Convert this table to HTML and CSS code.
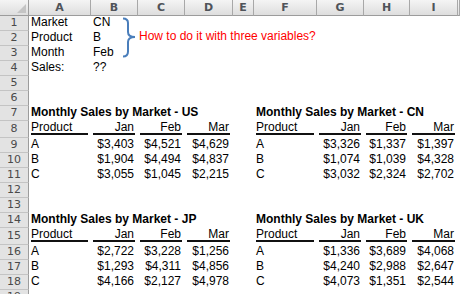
FILE: index.html
```html
<!DOCTYPE html>
<html>
<head>
<meta charset="utf-8">
<link rel="stylesheet" href="styles.css">
</head>
<body>
<div class="sheet">
  <div class="row hdr">
    <div class="corner"><span class="tri"></span></div>
    <div class="ch">A</div><div class="ch">B</div><div class="ch">C</div><div class="ch">D</div><div class="ch">E</div><div class="ch">F</div><div class="ch">G</div><div class="ch">H</div><div class="ch">I</div><div class="ch"></div>
  </div>

  <div class="row"><div class="rh">1</div><div class="c a">Market</div><div class="c b">CN</div></div>
  <div class="row"><div class="rh">2</div><div class="c a">Product</div><div class="c b">B</div></div>
  <div class="row"><div class="rh">3</div><div class="c a">Month</div><div class="c b">Feb</div></div>
  <div class="row"><div class="rh">4</div><div class="c a">Sales:</div><div class="c b">??</div></div>
  <div class="row"><div class="rh">5</div></div>
  <div class="row"><div class="rh">6</div></div>

  <div class="row"><div class="rh">7</div><div class="c a t">Monthly Sales by Market - US</div><div class="c f t">Monthly Sales by Market - CN</div></div>
  <div class="row tall"><div class="rh">8</div>
    <div class="c a"><div class="ul">Product</div></div><div class="c b"><div class="ul r">Jan</div></div><div class="c cc"><div class="ul r">Feb</div></div><div class="c d"><div class="ul r">Mar</div></div>
    <div class="c f"><div class="ul">Product</div></div><div class="c g"><div class="ul r">Jan</div></div><div class="c h"><div class="ul r">Feb</div></div><div class="c i"><div class="ul r">Mar</div></div>
  </div>
  <div class="row"><div class="rh">9</div><div class="c a">A</div><div class="c b r">$3,403</div><div class="c cc r">$4,521</div><div class="c d r">$4,629</div><div class="c f">A</div><div class="c g r">$3,326</div><div class="c h r">$1,337</div><div class="c i r">$1,397</div></div>
  <div class="row"><div class="rh">10</div><div class="c a">B</div><div class="c b r">$1,904</div><div class="c cc r">$4,494</div><div class="c d r">$4,837</div><div class="c f">B</div><div class="c g r">$1,074</div><div class="c h r">$1,039</div><div class="c i r">$4,328</div></div>
  <div class="row"><div class="rh">11</div><div class="c a">C</div><div class="c b r">$3,055</div><div class="c cc r">$1,045</div><div class="c d r">$2,215</div><div class="c f">C</div><div class="c g r">$3,032</div><div class="c h r">$2,324</div><div class="c i r">$2,702</div></div>
  <div class="row"><div class="rh">12</div></div>
  <div class="row"><div class="rh">13</div></div>

  <div class="row"><div class="rh">14</div><div class="c a t">Monthly Sales by Market - JP</div><div class="c f t">Monthly Sales by Market - UK</div></div>
  <div class="row tall"><div class="rh">15</div>
    <div class="c a"><div class="ul">Product</div></div><div class="c b"><div class="ul r">Jan</div></div><div class="c cc"><div class="ul r">Feb</div></div><div class="c d"><div class="ul r">Mar</div></div>
    <div class="c f"><div class="ul">Product</div></div><div class="c g"><div class="ul r">Jan</div></div><div class="c h"><div class="ul r">Feb</div></div><div class="c i"><div class="ul r">Mar</div></div>
  </div>
  <div class="row"><div class="rh">16</div><div class="c a">A</div><div class="c b r">$2,722</div><div class="c cc r">$3,228</div><div class="c d r">$1,256</div><div class="c f">A</div><div class="c g r">$1,336</div><div class="c h r">$3,689</div><div class="c i r">$4,068</div></div>
  <div class="row"><div class="rh">17</div><div class="c a">B</div><div class="c b r">$1,293</div><div class="c cc r">$4,311</div><div class="c d r">$4,856</div><div class="c f">B</div><div class="c g r">$4,240</div><div class="c h r">$2,988</div><div class="c i r">$2,647</div></div>
  <div class="row"><div class="rh">18</div><div class="c a">C</div><div class="c b r">$4,166</div><div class="c cc r">$2,127</div><div class="c d r">$4,978</div><div class="c f">C</div><div class="c g r">$4,073</div><div class="c h r">$1,351</div><div class="c i r">$2,544</div></div>
  <div class="row"><div class="rh">19</div></div>

  <svg class="brace" width="20" height="44" viewBox="0 0 20 44">
    <path d="M3 2.5 Q8 2.5 8 7 L8 16 Q8 21 15 21 Q8 21 8 26 L8 35.5 Q8 40.5 3 40.5" fill="none" stroke="#4a7ebb" stroke-width="2"/>
  </svg>
  <div class="note">How to do it with three variables?</div>
</div>
</body>
</html>
```

FILE: styles.css
```css
html, body {
  margin: 0;
  padding: 0;
  background: #fff;
}

.sheet {
  position: relative;
  width: 460px;
  height: 294px;
  overflow: hidden;
  font-family: "Liberation Sans", Arial, sans-serif;
  font-size: 12px;
  color: #000;
}

.row {
  display: grid;
  grid-template-columns: 29px 62px 47px 47px 48px 21px 63px 47px 46px 48px 1fr;
  height: 15px;
}

.row.tall {
  height: 17px;
}

.row.hdr {
  height: 16px;
}

.corner,
.ch {
  box-sizing: border-box;
  background: linear-gradient(#f4f4f4, #dedede);
  border-right: 1px solid #a8a8a8;
  border-bottom: 1px solid #9c9c9c;
  font-family: "DejaVu Sans", sans-serif;
  font-size: 11px;
  font-weight: bold;
  color: #4f5359;
  text-align: center;
  line-height: 15px;
}

.corner {
  position: relative;
  border-right-color: #9c9c9c;
}

.tri {
  position: absolute;
  right: 2px;
  bottom: 2px;
  width: 0;
  height: 0;
  border-left: 9px solid transparent;
  border-bottom: 9px solid #c4c4c4;
}

.rh {
  grid-column: 1;
  box-sizing: border-box;
  background: #e3e3e3;
  border-right: 1px solid #9c9c9c;
  border-bottom: 1px solid #c4c4c4;
  font-family: "DejaVu Sans", sans-serif;
  font-size: 11px;
  color: #4a4a4a;
  text-align: center;
  line-height: 14px;
}

.row.tall .rh {
  line-height: 16px;
}

.c {
  white-space: nowrap;
  line-height: 13px;
  padding: 0 4px 0 2px;
  min-width: 0;
}

.a { grid-column: 2; }
.b { grid-column: 3; }
.cc { grid-column: 4; }
.d { grid-column: 5; }
.f { grid-column: 7; }
.g { grid-column: 8; }
.h { grid-column: 9; }
.i { grid-column: 10; }

.r {
  text-align: right;
}

.t {
  font-weight: bold;
}

.row.tall .c {
  padding: 0;
}

.ul {
  height: 12px;
  line-height: 12px;
  margin: 0 3px 0 2px;
  border-bottom: 2px solid #111;
}

.ul.r {
  padding-right: 1px;
}

.brace {
  position: absolute;
  left: 120px;
  top: 16px;
}

.note {
  position: absolute;
  left: 139px;
  top: 30px;
  line-height: 13px;
  font-size: 12px;
  color: #ff0000;
  white-space: nowrap;
}
```
